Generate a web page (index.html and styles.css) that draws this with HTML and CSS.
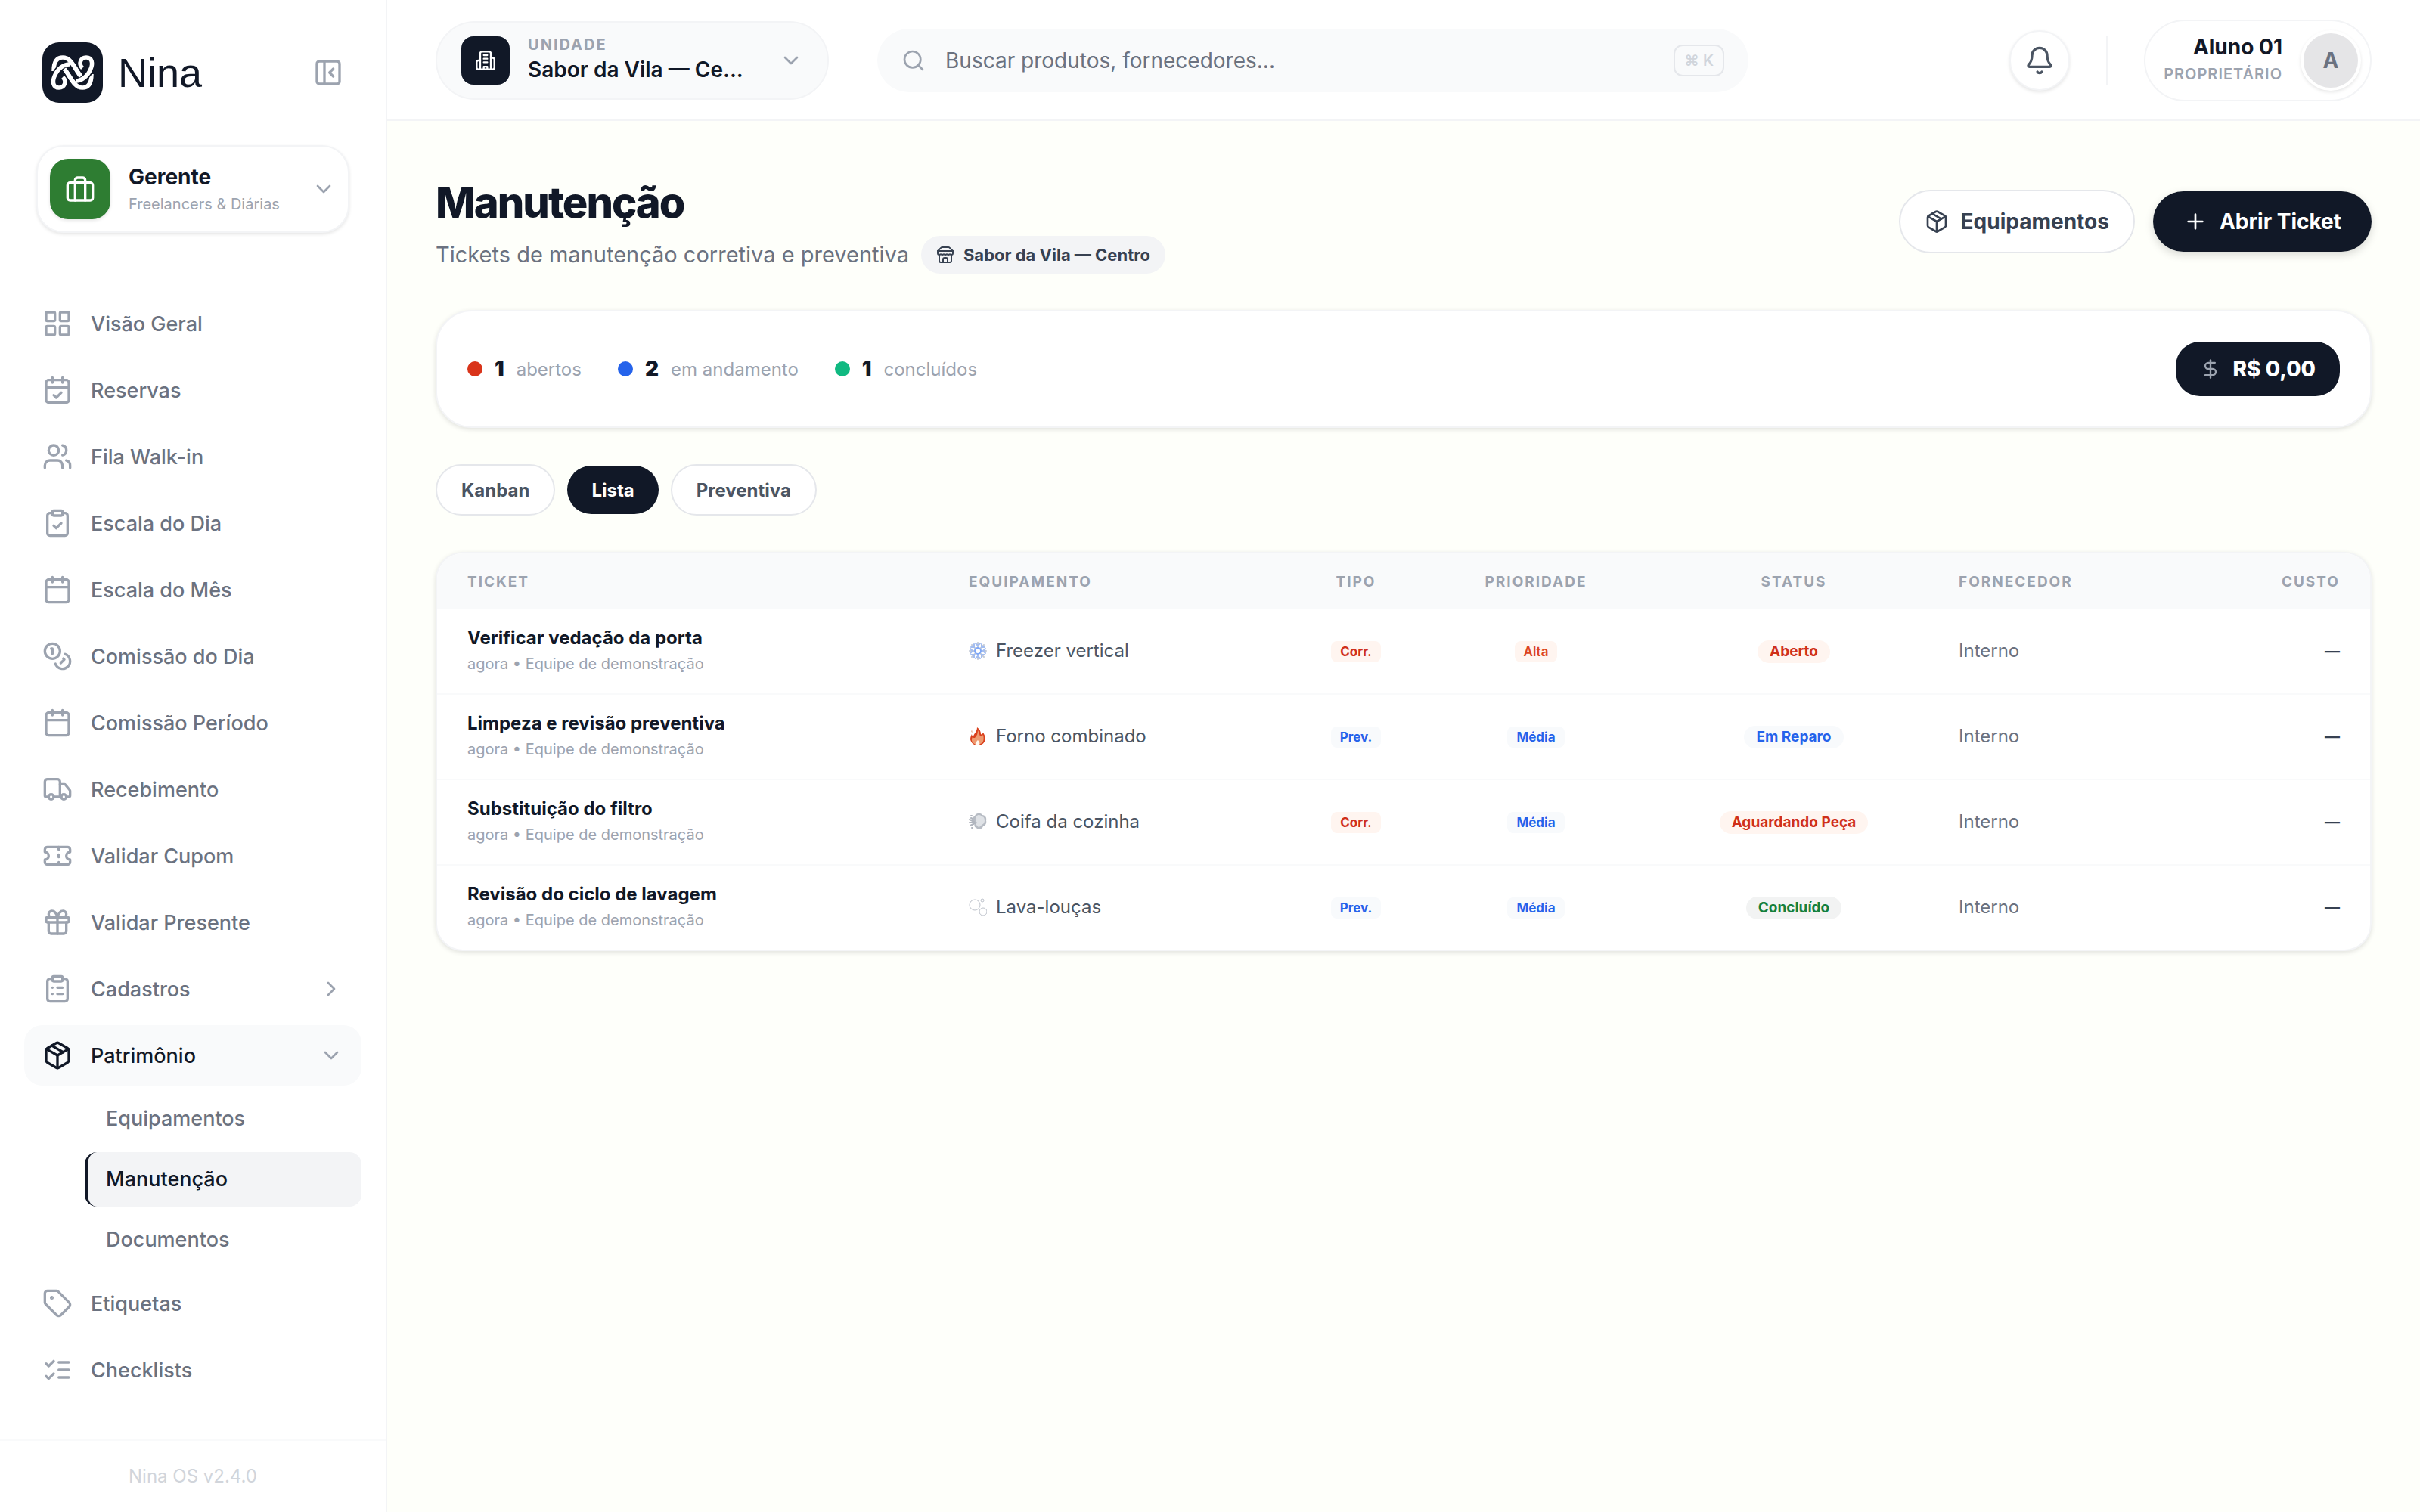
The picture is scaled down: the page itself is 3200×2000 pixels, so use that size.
FILE: index.html
```html
<!DOCTYPE html>
<html lang="pt-BR">
<head>
	<meta charset="utf-8">
	<title>Nina - Manutenção</title>
	<link rel="stylesheet" href="styles.css">
</head>
<body>
	<!-- shared icons -->
	<svg class="sprite" aria-hidden="true">
		<symbol id="chevron-down" viewBox="0 0 24 24"><path d="m6 9 6 6 6-6"/></symbol>
		<symbol id="chevron-right" viewBox="0 0 24 24"><path d="m9 18 6-6-6-6"/></symbol>
		<symbol id="calendar" viewBox="0 0 24 24"><path d="M8 2v4M16 2v4"/><rect width="18" height="18" x="3" y="4" rx="2"/><path d="M3 10h18"/></symbol>
		<symbol id="package" viewBox="0 0 24 24"><path d="M11 21.73a2 2 0 0 0 2 0l7-4A2 2 0 0 0 21 16V8a2 2 0 0 0-1-1.73l-7-4a2 2 0 0 0-2 0l-7 4A2 2 0 0 0 3 8v8a2 2 0 0 0 1 1.73z"/><path d="M12 22V12"/><path d="m3.3 7 8.7 5 8.7-5"/><path d="m7.5 4.27 9 5.15"/></symbol>
	</svg>

	<div class="app">
		<aside class="sidebar">
			<div class="brand">
				<svg class="logo" viewBox="0 0 80 80" aria-hidden="true">
					<rect width="80" height="80" rx="22" fill="#111827"/>
					<g fill="none" stroke="#fff" stroke-width="5.5">
						<path d="M15 38C15 26 19 20 27 20C39 20 43 36 51 45"/>
						<path d="M65 42C65 54 61 60 53 60C41 60 37 44 29 35"/>
						<path d="M53 34C47 28 51 20 58 20C66 20 67 28 64 35C60 45 52 51 44 51" stroke="#111827" stroke-width="9"/>
						<path d="M27 46C33 52 29 60 22 60C14 60 13 52 16 45C20 35 28 29 36 29" stroke="#111827" stroke-width="9"/>
						<path d="M53 34C47 28 51 20 58 20C66 20 67 28 64 35C60 45 52 51 44 51"/>
						<path d="M27 46C33 52 29 60 22 60C14 60 13 52 16 45C20 35 28 29 36 29"/>
						<path d="M32 21C40 25 45 38 51 45M48 59C40 55 35 42 29 35"/>
					</g>
				</svg>
				<span class="brand-name">Nina</span>
				<button class="collapse" type="button" aria-label="Recolher menu">
					<svg class="icon" viewBox="0 0 24 24"><rect width="18" height="18" x="3" y="3" rx="2"/><path d="M9 3v18"/><path d="m16 15-3-3 3-3"/></svg>
				</button>
			</div>

			<button class="role" type="button">
				<span class="role-icon"><svg class="icon" viewBox="0 0 24 24"><path d="M16 21V5a2 2 0 0 0-2-2h-4a2 2 0 0 0-2 2v16"/><rect width="20" height="14" x="2" y="7" rx="2"/></svg></span>
				<span class="role-text">
					<span class="role-name">Gerente</span>
					<span class="role-desc">Freelancers &amp; Diárias</span>
				</span>
				<svg class="icon icon-sm"><use href="#chevron-down"/></svg>
			</button>

			<nav class="nav">
				<a href="#" class="nav-item"><svg class="icon" viewBox="0 0 24 24"><rect width="7" height="7" x="3" y="3" rx="1"/><rect width="7" height="7" x="14" y="3" rx="1"/><rect width="7" height="7" x="14" y="14" rx="1"/><rect width="7" height="7" x="3" y="14" rx="1"/></svg>Visão Geral</a>
				<a href="#" class="nav-item"><svg class="icon" viewBox="0 0 24 24"><path d="M8 2v4M16 2v4"/><rect width="18" height="18" x="3" y="4" rx="2"/><path d="M3 10h18"/><path d="m9 16 2 2 4-4"/></svg>Reservas</a>
				<a href="#" class="nav-item"><svg class="icon" viewBox="0 0 24 24"><path d="M16 21v-2a4 4 0 0 0-4-4H6a4 4 0 0 0-4 4v2"/><circle cx="9" cy="7" r="4"/><path d="M22 21v-2a4 4 0 0 0-3-3.870"/><path d="M16 3.130a4 4 0 0 1 0 7.750"/></svg>Fila Walk-in</a>
				<a href="#" class="nav-item"><svg class="icon" viewBox="0 0 24 24"><rect width="8" height="4" x="8" y="2" rx="1"/><path d="M16 4h2a2 2 0 0 1 2 2v14a2 2 0 0 1-2 2H6a2 2 0 0 1-2-2V6a2 2 0 0 1 2-2h2"/><path d="m9 14 2 2 4-4"/></svg>Escala do Dia</a>
				<a href="#" class="nav-item"><svg class="icon"><use href="#calendar"/></svg>Escala do Mês</a>
				<a href="#" class="nav-item"><svg class="icon" viewBox="0 0 24 24"><circle cx="8" cy="8" r="6"/><path d="M18.090 10.370A6 6 0 1 1 10.340 18"/><path d="M7 6h1v4"/><path d="m16.710 13.880.7.710-2.820 2.820"/></svg>Comissão do Dia</a>
				<a href="#" class="nav-item"><svg class="icon"><use href="#calendar"/></svg>Comissão Período</a>
				<a href="#" class="nav-item"><svg class="icon" viewBox="0 0 24 24"><path d="M14 18V6a2 2 0 0 0-2-2H4a2 2 0 0 0-2 2v11a1 1 0 0 0 1 1h2"/><path d="M15 18H9"/><path d="M19 18h2a1 1 0 0 0 1-1v-3.650a1 1 0 0 0-.220-.624l-3.480-4.350A1 1 0 0 0 17.520 8H14"/><circle cx="17" cy="18" r="2"/><circle cx="7" cy="18" r="2"/></svg>Recebimento</a>
				<a href="#" class="nav-item"><svg class="icon" viewBox="0 0 24 24"><path d="M2 9a3 3 0 0 1 0 6v2a2 2 0 0 0 2 2h16a2 2 0 0 0 2-2v-2a3 3 0 0 1 0-6V7a2 2 0 0 0-2-2H4a2 2 0 0 0-2 2Z"/><path d="M13 5v2M13 17v2M13 11v2"/></svg>Validar Cupom</a>
				<a href="#" class="nav-item"><svg class="icon" viewBox="0 0 24 24"><rect x="3" y="8" width="18" height="4" rx="1"/><path d="M12 8v13"/><path d="M19 12v7a2 2 0 0 1-2 2H7a2 2 0 0 1-2-2v-7"/><path d="M7.500 8a2.500 2.500 0 0 1 0-5A4.800 8 0 0 1 12 8a4.800 8 0 0 1 4.500-5 2.500 2.500 0 0 1 0 5"/></svg>Validar Presente</a>
				<a href="#" class="nav-item"><svg class="icon" viewBox="0 0 24 24"><rect width="8" height="4" x="8" y="2" rx="1"/><path d="M16 4h2a2 2 0 0 1 2 2v14a2 2 0 0 1-2 2H6a2 2 0 0 1-2-2V6a2 2 0 0 1 2-2h2"/><path d="M12 11h4M12 16h4M8 11h.01M8 16h.01"/></svg>Cadastros<svg class="icon icon-sm nav-arrow"><use href="#chevron-right"/></svg></a>
				<a href="#" class="nav-item open"><svg class="icon"><use href="#package"/></svg>Patrimônio<svg class="icon icon-sm nav-arrow"><use href="#chevron-down"/></svg></a>
				<a href="#" class="nav-sub">Equipamentos</a>
				<a href="#" class="nav-sub active">Manutenção</a>
				<a href="#" class="nav-sub">Documentos</a>
				<a href="#" class="nav-item"><svg class="icon" viewBox="0 0 24 24"><path d="M12.586 2.586A2 2 0 0 0 11.172 2H4a2 2 0 0 0-2 2v7.172a2 2 0 0 0 .586 1.414l8.704 8.704a2.426 2.426 0 0 0 3.420 0l6.580-6.580a2.426 2.426 0 0 0 0-3.420z"/><circle cx="7.500" cy="7.500" r=".5" fill="currentColor"/></svg>Etiquetas</a>
				<a href="#" class="nav-item"><svg class="icon" viewBox="0 0 24 24"><path d="m3 17 2 2 4-4"/><path d="m3 7 2 2 4-4"/><path d="M13 6h8M13 12h8M13 18h8"/></svg>Checklists</a>
			</nav>

			<footer class="version">Nina OS v2.4.0</footer>
		</aside>

		<div class="main">
			<header class="topbar">
				<button class="unit" type="button">
					<span class="unit-icon"><svg class="icon" viewBox="0 0 24 24"><path d="M6 22V4a2 2 0 0 1 2-2h8a2 2 0 0 1 2 2v18Z"/><path d="M6 12H4a2 2 0 0 0-2 2v6a2 2 0 0 0 2 2h2"/><path d="M18 9h2a2 2 0 0 1 2 2v9a2 2 0 0 1-2 2h-2"/><path d="M10 6h4M10 10h4M10 14h4M10 22v-3h4v3"/></svg></span>
					<span class="unit-text">
						<span class="unit-label">UNIDADE</span>
						<span class="unit-name">Sabor da Vila — Ce...</span>
					</span>
					<svg class="icon icon-sm"><use href="#chevron-down"/></svg>
				</button>

				<label class="search">
					<svg class="icon icon-sm" viewBox="0 0 24 24"><circle cx="11" cy="11" r="8"/><path d="m21 21-4.300-4.300"/></svg>
					<input type="text" placeholder="Buscar produtos, fornecedores..." aria-label="Buscar">
					<kbd>⌘ K</kbd>
				</label>

				<div class="account">
					<button class="bell" type="button" aria-label="Notificações">
						<svg class="icon" viewBox="0 0 24 24"><path d="M10.268 21a2 2 0 0 0 3.464 0"/><path d="M3.262 15.326A1 1 0 0 0 4 17h16a1 1 0 0 0 .740-1.673C19.410 13.956 18 12.499 18 8A6 6 0 0 0 6 8c0 4.499-1.411 5.956-2.738 7.326"/></svg>
					</button>
					<span class="divider"></span>
					<button class="user" type="button">
						<span class="user-text">
							<span class="user-name">Aluno 01</span>
							<span class="user-role">PROPRIETÁRIO</span>
						</span>
						<span class="avatar">A</span>
					</button>
				</div>
			</header>

			<main class="content">
				<div class="page-head">
					<div>
						<h1>Manutenção</h1>
						<p class="subtitle">Tickets de manutenção corretiva e preventiva
							<span class="place"><svg class="icon" viewBox="0 0 24 24"><path d="m2 7 4.410-4.410A2 2 0 0 1 7.830 2h8.340a2 2 0 0 1 1.420.590L22 7"/><path d="M4 12v8a2 2 0 0 0 2 2h12a2 2 0 0 0 2-2v-8"/><path d="M15 22v-4a2 2 0 0 0-2-2h-2a2 2 0 0 0-2 2v4"/><path d="M2 7h20"/><path d="M22 7v3a2 2 0 0 1-2 2a2.700 2.700 0 0 1-1.590-.630.700.700 0 0 0-.820 0A2.700 2.700 0 0 1 16 12a2.700 2.700 0 0 1-1.590-.630.700.700 0 0 0-.820 0A2.700 2.700 0 0 1 12 12a2.700 2.700 0 0 1-1.590-.630.700.700 0 0 0-.820 0A2.700 2.700 0 0 1 8 12a2.700 2.700 0 0 1-1.590-.630.700.700 0 0 0-.820 0A2.700 2.700 0 0 1 4 12a2 2 0 0 1-2-2V7"/></svg>Sabor da Vila — Centro</span>
						</p>
					</div>
					<div class="actions">
						<button class="btn" type="button"><svg class="icon icon-sm"><use href="#package"/></svg>Equipamentos</button>
						<button class="btn btn-dark" type="button"><svg class="icon icon-sm" viewBox="0 0 24 24"><path d="M5 12h14M12 5v14"/></svg>Abrir Ticket</button>
					</div>
				</div>

				<section class="summary">
					<div class="stat"><span class="dot red"></span><strong>1</strong>abertos</div>
					<div class="stat"><span class="dot blue"></span><strong>2</strong>em andamento</div>
					<div class="stat"><span class="dot green"></span><strong>1</strong>concluídos</div>
					<div class="total"><svg class="icon" viewBox="0 0 24 24"><path d="M12 2v20"/><path d="M17 5H9.500a3.500 3.500 0 0 0 0 7h5a3.500 3.500 0 0 1 0 7H6"/></svg>R$ 0,00</div>
				</section>

				<div class="tabs">
					<button class="tab" type="button">Kanban</button>
					<button class="tab selected" type="button">Lista</button>
					<button class="tab" type="button">Preventiva</button>
				</div>

				<div class="table-card">
					<table>
						<colgroup>
							<col class="col-ticket">
							<col class="col-equip">
							<col class="col-type">
							<col class="col-priority">
							<col class="col-status">
							<col class="col-vendor">
							<col class="col-cost">
						</colgroup>
						<thead>
							<tr><th>TICKET</th><th>EQUIPAMENTO</th><th class="center">TIPO</th><th class="center">PRIORIDADE</th><th class="center">STATUS</th><th>FORNECEDOR</th><th class="right">CUSTO</th></tr>
						</thead>
						<tbody>
							<tr>
								<td><span class="ticket">Verificar vedação da porta</span><span class="meta">agora • Equipe de demonstração</span></td>
								<td><span class="equip"><svg class="emoji" viewBox="0 0 24 24"><g fill="none" stroke-linecap="round"><path d="M12 1v7M12 16v7M1 12h7M16 12h7M4 4l5 5M15 15l5 5M20 4l-5 5M9 15l-5 5" stroke="#c3cad6" stroke-width="2"/><path d="m9 2 3 3 3-3M9 22l3-3 3 3M2 9l3 3-3 3M22 9l-3 3 3 3M3 7l4 0 0-4M17 3v4h4M3 17h4v4M17 21v-4h4" stroke="#a3bdf0" stroke-width="2"/><circle cx="12" cy="12" r="4" stroke="#7fa8f8" stroke-width="2"/></g></svg>Freezer vertical</span></td>
								<td class="center"><span class="chip chip-red">Corr.</span></td>
								<td class="center"><span class="chip chip-orange">Alta</span></td>
								<td class="center"><span class="pill chip-red">Aberto</span></td>
								<td class="vendor">Interno</td>
								<td class="cost">—</td>
							</tr>
							<tr>
								<td><span class="ticket">Limpeza e revisão preventiva</span><span class="meta">agora • Equipe de demonstração</span></td>
								<td><span class="equip"><svg class="emoji" viewBox="0 0 24 24"><path d="M11 0c3 2 5 5 5 9 1 1 2 0 3-2 2 3 3 6 3 9-1 5-5 8-10 8S3 21 2 16c0-3 1-5 2-7 0 2 1 3 2 3 1-4 5-6 5-12z" fill="#d9401c"/><path d="M12 4c2 3 2 6 3 8 2 0 3-1 4-2 1 4 1 8-1 10-2 3-9 4-12 1-2-2-3-5-1-8 1 1 2 1 3 1 3-3 4-6 4-10z" fill="#ee9a70"/><path d="M12 17c2 2 3 4 2 7h-5c-1-3 1-5 3-7z" fill="#fff8f0"/><path d="M4 3l-1 3 2 1z" fill="#e9b49c"/></svg>Forno combinado</span></td>
								<td class="center"><span class="chip chip-blue">Prev.</span></td>
								<td class="center"><span class="chip chip-blue">Média</span></td>
								<td class="center"><span class="pill chip-blue">Em Reparo</span></td>
								<td class="vendor">Interno</td>
								<td class="cost">—</td>
							</tr>
							<tr>
								<td><span class="ticket">Substituição do filtro</span><span class="meta">agora • Equipe de demonstração</span></td>
								<td><span class="equip"><svg class="emoji" viewBox="0 0 24 24"><path d="M8 4c2-4 8-4 10-1 4 0 6 4 5 7 1 4-1 7-4 8-1 4-7 5-9 2-3-1-3-4-2-6-2-1-3-3-2-5-1-2 0-4 2-5z" fill="#b7bcc4"/><path d="M10 5c2-3 6-2 7 0 3 0 4 3 4 5 0 3-1 5-4 6-1 3-5 4-6 1-2-1-1-3 0-4-2-2-3-6-1-8z" fill="#dfe2e6"/><path d="M1 9l6 3M1 13h7M2 17l6-3M3 4h1M3 7l2 1M4 20h1" fill="none" stroke="#b0b5be" stroke-width="2" stroke-linecap="round"/></svg>Coifa da cozinha</span></td>
								<td class="center"><span class="chip chip-red">Corr.</span></td>
								<td class="center"><span class="chip chip-blue">Média</span></td>
								<td class="center"><span class="pill chip-red">Aguardando Peça</span></td>
								<td class="vendor">Interno</td>
								<td class="cost">—</td>
							</tr>
							<tr>
								<td><span class="ticket">Revisão do ciclo de lavagem</span><span class="meta">agora • Equipe de demonstração</span></td>
								<td><span class="equip"><svg class="emoji" viewBox="0 0 24 24"><g fill="none" stroke="#bcc1ca"><circle cx="8" cy="9" r="7"/><circle cx="19" cy="18" r="5"/><circle cx="18" cy="3" r="2"/></g></svg>Lava-louças</span></td>
								<td class="center"><span class="chip chip-blue">Prev.</span></td>
								<td class="center"><span class="chip chip-blue">Média</span></td>
								<td class="center"><span class="pill chip-green">Concluído</span></td>
								<td class="vendor">Interno</td>
								<td class="cost">—</td>
							</tr>
						</tbody>
					</table>
				</div>
			</main>
		</div>
	</div>
</body>
</html>
```
FILE: styles.css
```css
* {
	box-sizing: border-box;
}
body {
	margin: 0;
	background-color: #fefffa;
	font-family: Inter, "Liberation Sans", sans-serif;
	font-size: 28px;
	color: #111827;
}
button {
	font: inherit;
	color: inherit;
	margin: 0;
	cursor: pointer;
}
a {
	text-decoration: none;
}
.sprite {
	display: none;
}
.icon {
	width: 40px;
	height: 40px;
	flex-shrink: 0;
	fill: none;
	stroke: currentColor;
	stroke-width: 2;
	stroke-linecap: round;
	stroke-linejoin: round;
}
.icon-sm {
	width: 32px;
	height: 32px;
	color: #9ca3af;
}
.app {
	display: flex;
	min-height: 100vh;
}

/* sidebar */
.sidebar {
	width: 512px;
	flex-shrink: 0;
	display: flex;
	flex-direction: column;
	background-color: #fff;
	border-right: 2px solid #f3f4f6;
}
.brand {
	display: flex;
	align-items: center;
	padding: 56px 56px 0;
}
.logo {
	width: 80px;
	height: 80px;
}
.brand-name {
	margin-left: 20px;
	font-family: "Liberation Sans", Arial, sans-serif;
	font-size: 54px;
	line-height: 80px;
}
.collapse {
	display: flex;
	margin-left: auto;
	padding: 0;
	border: none;
	background: none;
	color: #9ca3af;
}
.role {
	display: flex;
	align-items: center;
	gap: 24px;
	margin: 56px 48px 0;
	padding: 16px;
	border: 2px solid #f3f4f6;
	border-radius: 36px;
	background-color: #fff;
	text-align: left;
	box-shadow: 0 2px 4px rgba(0, 0, 0, 0.1);
}
.role .icon-sm {
	margin-left: auto;
}
.role-icon {
	display: flex;
	padding: 20px;
	border-radius: 24px;
	background-color: #2e7d32;
	color: #fff;
	box-shadow: 0 2px 4px rgba(0, 0, 0, 0.1);
}
.role-text {
	display: flex;
	flex-direction: column;
}
.role-name {
	font-weight: 700;
	line-height: 40px;
}
.role-desc {
	font-size: 20px;
	line-height: 32px;
	color: #9ca3af;
}
.nav {
	flex: 1;
	display: flex;
	flex-direction: column;
	gap: 8px;
	padding: 80px 32px 32px;
	font-size: 27px;
	font-weight: 500;
}
.nav-item {
	display: flex;
	align-items: center;
	gap: 24px;
	height: 80px;
	padding: 0 24px;
	border-radius: 24px;
	color: #6b7280;
}
.nav-item .icon {
	color: #9ca3af;
}
.nav-item .nav-arrow {
	margin-left: auto;
}
.nav-item.open {
	background-color: #f9fafb;
	color: #111827;
}
.nav-item.open .icon:first-child {
	color: #111827;
}
.nav-sub {
	height: 72px;
	margin-left: 80px;
	padding-left: 24px;
	border-left: 4px solid transparent;
	border-radius: 16px;
	line-height: 72px;
	color: #6b7280;
}
.nav-sub.active {
	border-left-color: #111827;
	background-color: #f3f4f6;
	color: #111827;
}
.version {
	border-top: 2px solid #f9fafb;
	font-size: 24px;
	line-height: 94px;
	text-align: center;
	color: #d1d5db;
}

/* top bar */
.main {
	flex: 1;
	min-width: 0;
}
.topbar {
	display: flex;
	align-items: center;
	height: 160px;
	padding: 2px 64px 0;
	background-color: #fff;
	border-bottom: 2px solid #f3f4f6;
}
.unit {
	display: flex;
	align-items: center;
	width: 520px;
	height: 104px;
	padding: 0 32px;
	border: 2px solid #f3f4f6;
	border-radius: 52px;
	background-color: #f9fafb;
	text-align: left;
}
.unit-icon {
	display: flex;
	padding: 18px;
	border-radius: 16px;
	background-color: #111827;
	color: #fff;
}
.unit-icon .icon {
	width: 28px;
	height: 28px;
}
.unit-text {
	display: flex;
	flex-direction: column;
	margin: 0 auto 0 24px;
}
.unit-label {
	font-size: 20px;
	font-weight: 700;
	line-height: 24px;
	letter-spacing: 2px;
	color: #9ca3af;
}
.unit-name {
	font-weight: 600;
	line-height: 42px;
	white-space: nowrap;
}
.search {
	display: flex;
	align-items: center;
	flex: 0 1 1152px;
	height: 84px;
	margin-left: 64px;
	padding: 0 32px;
	border-radius: 42px;
	background-color: #f9fafb;
}
.search input {
	flex: 1;
	min-width: 0;
	padding: 0 26px;
	border: none;
	outline: none;
	background: none;
	font: inherit;
}
.search input::placeholder {
	color: #6b7280;
}
.search kbd {
	padding: 0 12px;
	border: 2px solid #e5e7eb;
	border-radius: 12px;
	font-family: inherit;
	font-size: 20px;
	font-weight: 600;
	line-height: 38px;
	color: #d1d5db;
}
.account {
	display: flex;
	align-items: center;
	gap: 48px;
	margin-left: auto;
}
.bell {
	display: flex;
	padding: 18px;
	border: 2px solid #f3f4f6;
	border-radius: 50%;
	background-color: #fff;
	color: #4b5563;
	box-shadow: 0 2px 4px rgba(0, 0, 0, 0.1);
}
.divider {
	width: 2px;
	height: 64px;
	background-color: #f3f4f6;
}
.user {
	display: flex;
	align-items: center;
	gap: 24px;
	padding: 12px 12px 12px 24px;
	border: 2px solid #f3f4f6;
	border-radius: 54px;
	background-color: #fff;
	text-align: right;
}
.user-text {
	display: flex;
	flex-direction: column;
}
.user-name {
	font-weight: 700;
	line-height: 36px;
}
.user-role {
	font-size: 20px;
	font-weight: 600;
	line-height: 36px;
	letter-spacing: 1px;
	color: #9ca3af;
}
.avatar {
	width: 80px;
	border: 4px solid #fff;
	border-radius: 50%;
	background-color: #e5e5e7;
	font-weight: 700;
	line-height: 72px;
	text-align: center;
	color: #6b7280;
	box-shadow: 0 2px 4px rgba(0, 0, 0, 0.1);
}

/* page content */
.content {
	padding: 64px;
}
.page-head {
	display: flex;
	align-items: center;
	justify-content: space-between;
	margin-bottom: 48px;
}
h1 {
	margin: 4px 0;
	font-size: 56px;
	font-weight: 800;
	line-height: 80px;
	letter-spacing: -2px;
}
.subtitle {
	display: flex;
	align-items: center;
	gap: 16px;
	margin: 0;
	font-size: 29px;
	line-height: 50px;
	color: #6b7280;
}
.place {
	display: flex;
	align-items: center;
	gap: 12px;
	padding: 0 20px;
	border-radius: 25px;
	background-color: #f3f4f6;
	font-size: 22px;
	font-weight: 700;
	color: #374151;
}
.place .icon {
	width: 24px;
	height: 24px;
}
.actions {
	display: flex;
	align-items: center;
	gap: 24px;
}
.btn {
	display: flex;
	align-items: center;
	gap: 16px;
	height: 84px;
	padding: 0 32px;
	border: 2px solid #e5e7eb;
	border-radius: 42px;
	background-color: #fff;
	font-weight: 700;
	color: #374151;
}
.btn .icon {
	color: inherit;
}
.btn-dark {
	height: 80px;
	padding: 0 40px;
	border: none;
	background-color: #111827;
	color: #fff;
	box-shadow: 0 4px 12px rgba(0, 0, 0, 0.15);
}
.summary {
	display: flex;
	align-items: center;
	gap: 48px;
	margin-bottom: 48px;
	padding: 40px;
	border: 2px solid #f3f4f6;
	border-radius: 48px;
	background-color: #fff;
	box-shadow: 0 2px 6px rgba(0, 0, 0, 0.12);
}
.stat {
	display: flex;
	align-items: center;
	gap: 16px;
	font-size: 24px;
	color: #9ca3af;
}
.stat strong {
	font-size: 28px;
	font-weight: 900;
	color: #111827;
}
.dot {
	width: 20px;
	height: 20px;
	border-radius: 50%;
}
.dot.red {
	background-color: #d9341a;
}
.dot.blue {
	background-color: #2563eb;
}
.dot.green {
	background-color: #10b981;
}
.total {
	display: flex;
	align-items: center;
	gap: 16px;
	height: 72px;
	margin-left: auto;
	padding: 0 32px;
	border-radius: 32px;
	background-color: #111827;
	font-weight: 800;
	color: #fff;
}
.total .icon {
	width: 28px;
	height: 28px;
	color: #9ca3af;
}
.tabs {
	display: flex;
	align-items: center;
	gap: 16px;
	margin-bottom: 48px;
}
.tab {
	height: 68px;
	padding: 0 32px;
	border: 2px solid #e5e7eb;
	border-radius: 34px;
	background-color: #fff;
	font-size: 24px;
	font-weight: 700;
	color: #4b5563;
}
.tab.selected {
	height: 64px;
	border: none;
	background-color: #111827;
	color: #fff;
}

/* tickets table */
.table-card {
	overflow: hidden;
	border: 2px solid #f3f4f6;
	border-radius: 36px;
	background-color: #fff;
	box-shadow: 0 2px 6px rgba(0, 0, 0, 0.12);
}
table {
	width: 100%;
	table-layout: fixed;
	border-collapse: separate;
	border-spacing: 0;
	font-size: 24px;
}
.col-ticket { width: 663px; }
.col-equip { width: 477px; }
.col-type { width: 150px; }
.col-priority { width: 326px; }
.col-status { width: 356px; }
.col-vendor { width: 300px; }
.col-cost { width: 284px; }
th {
	height: 74px;
	padding: 0 40px;
	background-color: #f9fafb;
	font-size: 19px;
	font-weight: 700;
	letter-spacing: 2px;
	text-align: left;
	color: #9ca3af;
}
td {
	height: 113px;
	padding: 0 40px 2px;
	border-bottom: 2px solid #f9fafb;
	white-space: nowrap;
}
tr:last-child td {
	height: 111px;
	border-bottom: none;
}
.center {
	padding-left: 0;
	padding-right: 0;
	text-align: center;
}
.right {
	text-align: right;
}
.ticket,
.meta {
	display: block;
	line-height: 34px;
}
.ticket {
	font-weight: 700;
}
.meta {
	font-size: 20px;
	color: #9ca3af;
}
.equip {
	display: flex;
	align-items: center;
	gap: 12px;
	color: #4b5563;
}
.emoji {
	width: 24px;
	height: 24px;
}
.chip,
.pill {
	display: inline-block;
	font-weight: 700;
}
.chip {
	padding: 0 12px;
	border-radius: 8px;
	font-size: 17px;
	line-height: 28px;
}
.pill {
	padding: 0 16px;
	border-radius: 15px;
	font-size: 19px;
	line-height: 30px;
}
.chip-red {
	background-color: #fff5f0;
	color: #d0301a;
}
.chip-orange {
	background-color: #fff5f0;
	font-weight: 600;
	color: #dc4420;
}
.chip-blue {
	background-color: #f8fafc;
	color: #2563eb;
}
.chip-green {
	background-color: #f2f3f3;
	color: #15803d;
}
.vendor {
	color: #6b7280;
}
.cost {
	font-size: 20px;
	font-weight: 700;
	text-align: right;
	color: #374151;
}
```
